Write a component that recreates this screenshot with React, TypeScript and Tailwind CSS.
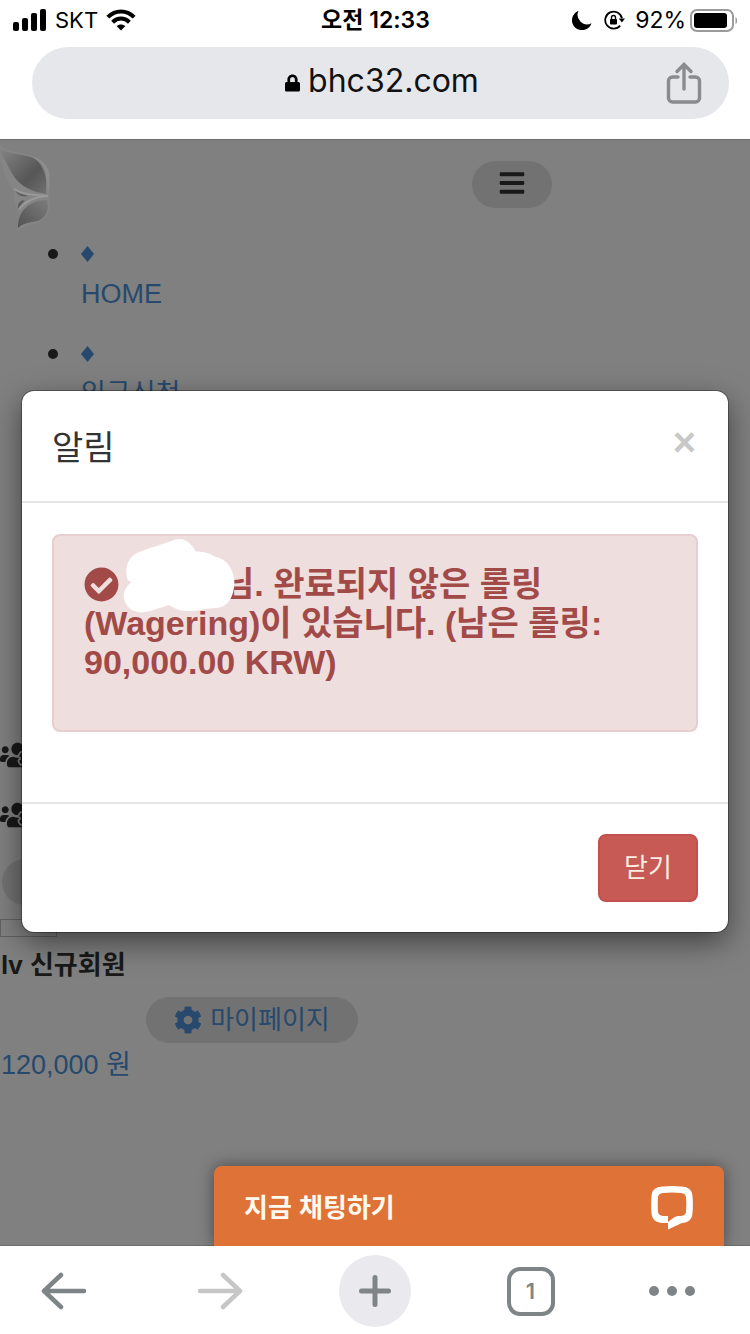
import { FaBars, FaCheckCircle, FaCog, FaLock, FaUsersCog } from "react-icons/fa"

function StatusBar() {
    return (
        <div className="grid h-10 grid-cols-3 items-center pl-[13px] pr-3 font-['Inter','Noto_Sans_CJK_KR',sans-serif] text-[23px] leading-10 text-black">
            <div className="flex items-center gap-2">
                <svg className="h-[22px] w-[34px]" viewBox="0 0 34 22" aria-hidden="true">
                    <rect x="0" y="13" width="6" height="9" rx="2" />
                    <rect x="9" y="9" width="6" height="13" rx="2" />
                    <rect x="18" y="4" width="6" height="18" rx="2" />
                    <rect x="27" y="0" width="6" height="22" rx="2" />
                </svg>
                <span className="text-[22px]">SKT</span>
                <svg className="h-[22px] w-[30px]" viewBox="0 0 30 22" fill="none" stroke="#000" strokeWidth="4" aria-hidden="true">
                    <path d="M1.8 8.2C9.5 .6 20.5 .6 28.2 8.2" />
                    <path d="M6.6 13.2c5-4.8 11.800-4.800 16.800 0" />
                    <path d="M15 21.500l-4.400-4.400c2.600-2.200 6.200-2.200 8.800 0z" fill="#000" stroke="none" />
                </svg>
            </div>
            <div className="text-center font-semibold">오전 12:33</div>
            <div className="flex items-center justify-end">
                <svg className="mr-3 h-5 w-5" viewBox="0 0 20 20" aria-hidden="true">
                    <path d="M6.500 .8A10 10 0 1 0 19.500 13.200 9.500 9.500 0 0 1 6.500 .8z" />
                </svg>
                <svg className="mr-[10px] h-5 w-[21px]" viewBox="0 0 21 20" fill="none" stroke="#000" strokeWidth="1.800" aria-hidden="true">
                    <path d="M18 8.200A8.500 8.500 0 1 0 16.200 15.600" />
                    <path d="M14.800 8.500h6.200l-3.100 4z" fill="#000" stroke="none" />
                    <rect x="6" y="9" width="7" height="5.500" rx="1" fill="#000" stroke="none" />
                    <path d="M7.500 9.500V7.500a2 2 0 0 1 4 0v2" strokeWidth="1.400" />
                </svg>
                <span className="mr-1">92%</span>
                <svg className="h-[23px] w-[48px]" viewBox="0 0 48 23" aria-hidden="true">
                    <rect x="1" y="1" width="42" height="21" rx="6" fill="none" stroke="#9b9b9b" strokeWidth="2" />
                    <rect x="4" y="4" width="33" height="15" rx="3" />
                    <path d="M45.500 8c2.200 1.200 2.200 6 0 7.200z" fill="#9b9b9b" />
                </svg>
            </div>
        </div>
    )
}

function AddressBar() {
    return (
        <div className="ml-8 mr-[21px] mt-[7px] flex h-[72px] items-center rounded-full bg-[#e6e7eb] pr-[27px]">
            <div className="flex flex-1 items-center justify-center gap-2 pl-[66px] font-['Inter',sans-serif] text-[32px] leading-10 text-[#111]">
                <FaLock className="h-5 w-[15px] text-black" aria-hidden="true" />
                <span className="pb-1">bhc32.com</span>
            </div>
            <button aria-label="Share">
                <svg className="h-[42px] w-9" viewBox="0 0 36 42" fill="none" stroke="#8a8b8e" strokeWidth="3.400" strokeLinecap="round" aria-hidden="true">
                    <path d="M12 15H6.500a4 4 0 0 0-4 4v17a4 4 0 0 0 4 4h23a4 4 0 0 0 4-4V19a4 4 0 0 0-4-4H24" />
                    <path d="M18 27V3M11 9.500l7-7 7 7" />
                </svg>
            </button>
        </div>
    )
}

function ButterflyLogo() {
    return (
        <svg className="mt-1 h-[90px] w-[51px]" viewBox="0 0 51 90" aria-hidden="true">
            <defs>
                <linearGradient id="upperWing" x1="0" y1="0" x2="1" y2="1">
                    <stop offset="0" stopColor="#868686" />
                    <stop offset=".65" stopColor="#565656" />
                    <stop offset="1" stopColor="#707070" />
                </linearGradient>
                <linearGradient id="lowerWing" x1="1" y1="0" x2="0" y2="1">
                    <stop offset="0" stopColor="#7c7c7c" />
                    <stop offset="1" stopColor="#525252" />
                </linearGradient>
            </defs>
            <path d="M0 2C4 8 12 8 22 10c14 2 23 8 27 18 2 8 1 17 0 26 2 9 0 20-9 25-8 4-17 2-22 10-1-5 0-12 2-16-4-6-7-18-6-25C6 38 2 24 0 14z" fill="#858585" />
            <path d="M0 3C4 10 12 10 22 12c13 2 20 7 23 16 2 8 1 16 1 23C34 49 20 44 13 32 8 24 5 16 0 9z" fill="url(#upperWing)" />
            <path d="M33 14c9 2 14 8 16 15 1 8 0 15-1 21-1-13-3-27-15-36z" fill="#939393" opacity=".6" />
            <path d="M14 46c7 5 18 6 34 7-13 1-21 4-29 13" fill="none" stroke="#999" strokeWidth="2" />
            <path d="M47 57c2 7 1 15-7 20-6 3-15 1-22 8 0-16 9-27 29-28z" fill="url(#lowerWing)" />
            <path d="M15 47c3 4 7 4 13 6-5 1-10 0-13-6z" fill="#585858" />
            <path d="M25 57c-4 0-8 3-7 9 2-4 5-6 7-9z" fill="#5c5c5c" />
        </svg>
    )
}

function MenuItem({ label }: { label: string }) {
    return (
        <li className="flex gap-[23px]">
            <span className="mt-[15px] size-[10px] rounded-full bg-[#191919]" />
            <a href="#" className="text-[#26496d]">
                <svg className="mb-3 mt-3 h-4 w-[13px]" viewBox="0 0 13 16" fill="currentColor" aria-hidden="true">
                    <path d="M6.500 0L13 8l-6.500 8L0 8z" />
                </svg>
                {label}
            </a>
        </li>
    )
}

function SitePage() {
    return (
        <div className="text-[27px] leading-10 text-[#191919]">
            <div className="flex h-[95px] items-start justify-between pr-[198px]">
                <ButterflyLogo />
                <button className="mt-[22px] flex h-[47px] w-20 items-center justify-center rounded-full bg-[#727272] pb-[3px]" aria-label="Menu">
                    <FaBars className="size-7" />
                </button>
            </div>
            <ul className="flex flex-col gap-5 pl-12">
                <MenuItem label="HOME" />
                <MenuItem label="입금신청" />
            </ul>

            <div className="mt-[321px] flex flex-col gap-5">
                <div className="flex h-10 items-center"><FaUsersCog className="h-7 w-[35px]" /></div>
                <div className="flex h-10 items-center"><FaUsersCog className="h-7 w-[35px]" /></div>
            </div>
            <div className="ml-[2px] mt-6 h-[46px] w-40 rounded-full bg-[#727272]" />
            <div className="mt-[14px] h-[18px] w-[57px] border border-[#626262]" />
            <p className="mt-2 pl-px text-[26px] font-bold">lv 신규회원</p>
            <a href="#" className="ml-[146px] mt-3 flex h-[46px] w-[212px] items-center justify-center gap-2 rounded-full bg-[#727272] text-[26px] text-[#26496d]">
                <FaCog className="size-7" />
                마이페이지
            </a>
            <a href="#" className="mt-[2px] block pl-px text-[#26496d]">120,000 원</a>
        </div>
    )
}

function NoticeModal() {
    return (
        <div
            role="dialog"
            aria-labelledby="notice-title"
            className="absolute inset-x-[22px] top-[252px] rounded-xl bg-white shadow-[0_0_0_1px_rgba(0,0,0,0.3),0_10px_30px_rgba(0,0,0,0.5)]"
        >
            <div className="flex h-[112px] items-center justify-between border-b-2 border-[#e5e5e5] pl-[30px] pr-8 pt-1">
                <h4 id="notice-title" className="text-[34px] leading-10 text-[#333]">알림</h4>
                <button className="pb-3 text-[40px] font-bold leading-10 text-[#c8c8c8]" aria-label="Close">×</button>
            </div>

            <div className="px-[30px] pb-[70px] pt-[31px]">
                <div className="h-[198px] rounded-lg border-2 border-[#e6ced1] bg-[#eedede] px-[30px] pt-[29px]">
                    <p className="break-keep text-[34px] font-bold leading-[39px] text-[#a24a48]">
                        <FaCheckCircle className="inline size-[35px] align-[-6px]" />
                        {/* name is painted over */}
                        <span className="relative inline-block h-8 w-[104px] align-bottom">
                            <svg className="absolute -top-[34px] left-1 h-[75px] w-28" viewBox="248 54 336 226" fill="#fff" aria-hidden="true">
                                <path d="M262 182c-12-36-2-64 25-82 30-14 76-25 114-40 26-10 50 5 66 35 25 0 45 7 56 15 38 8 58 38 60 77-1 45-20 75-55 78-38 1-55 11-90 9-25 0-35-9-52-17-28 7-48 17-78 21-35 2-57-20-59-50 1-17 11-31 24-42z" />
                            </svg>
                        </span>
                        님. 완료되지 않은 롤링 (Wagering)이 있습니다. (남은 롤링: 90,000.00 KRW)
                    </p>
                </div>
            </div>

            <div className="flex justify-end border-t-2 border-[#e5e5e5] p-[30px]">
                <button className="h-[68px] w-[100px] rounded-lg border-2 border-[#c44f4c] bg-[#c75a54] text-[26px] leading-10 text-[#fbeee2]">
                    닫기
                </button>
            </div>
        </div>
    )
}

function ChatWidget() {
    return (
        <button className="absolute bottom-0 left-[214px] right-[26px] flex h-20 items-center justify-between rounded-t-lg bg-[#df7237] pl-[30px] pr-[31px] pt-[3px] text-[26px] font-bold leading-10 text-[#fffaf0] shadow-[0_0_16px_rgba(0,0,0,0.45)]">
            지금 채팅하기
            <svg className="h-[45px] w-[42px]" viewBox="0 0 42 45" aria-hidden="true">
                <path
                    fillRule="evenodd"
                    fill="#fff"
                    d="M12 1.500Q21 .5 30 1.500C38 2 41 5 41.500 11q.8 9 0 17C41 35 37 37.500 31 38L17 44.500V38h-5C5 37.500 1 35 .5 28q-.8-8 0-17C1 5 4 2 12 1.500zM12 8Q21 7.200 30 8q4.500.4 5 4 .6 7 0 15-.5 3.600-5 4h-3q-2 0-4 1.500l-6 4.500V31h-5q-4.500-.4-5-4-.6-8 0-15 .5-3.600 5-4z"
                />
            </svg>
        </button>
    )
}

function BrowserNav() {
    return (
        <nav className="flex h-[88px] items-center justify-between bg-white pl-7 pr-14 pt-[2px] text-[#7f8487]">
            <button className="flex size-[72px] items-center justify-center" aria-label="Back">
                <svg className="h-10 w-[46px]" viewBox="0 0 46 40" fill="none" stroke="currentColor" strokeWidth="4.500" strokeLinecap="round" strokeLinejoin="round" aria-hidden="true">
                    <path d="M43 20H3M20 4L3 20l17 16" />
                </svg>
            </button>
            <button className="flex size-[72px] items-center justify-center text-[#c6c6c6]" aria-label="Forward">
                <svg className="h-10 w-[46px]" viewBox="0 0 46 40" fill="none" stroke="currentColor" strokeWidth="4.500" strokeLinecap="round" strokeLinejoin="round" aria-hidden="true">
                    <path d="M3 20h40M26 4l17 16-17 16" />
                </svg>
            </button>
            <button className="flex size-[72px] items-center justify-center rounded-full bg-[#e9e9ee]" aria-label="New tab">
                <svg className="size-8" viewBox="0 0 32 32" stroke="currentColor" strokeWidth="5" strokeLinecap="round" aria-hidden="true">
                    <path d="M16 2.500v27M2.500 16h27" />
                </svg>
            </button>
            <button className="flex size-[72px] items-center justify-center" aria-label="Tabs">
                <span className="flex h-[49px] w-12 items-center justify-center rounded-[13px] border-4 border-current font-['Inter',sans-serif] text-[22px] font-semibold leading-8">1</span>
            </button>
            <button className="flex h-[72px] w-11 items-center justify-center gap-2" aria-label="More">
                <span className="size-[10px] shrink-0 rounded-full bg-current" />
                <span className="size-[10px] shrink-0 rounded-full bg-current" />
                <span className="size-[10px] shrink-0 rounded-full bg-current" />
            </button>
        </nav>
    )
}

export default function App() {
    return (
        <div className="flex min-h-screen flex-col bg-white font-['Liberation_Sans','Noto_Sans_CJK_KR',sans-serif]">
            <header className="h-[139px] bg-white">
                <StatusBar />
                <AddressBar />
            </header>
            <main className="relative flex-1 overflow-hidden bg-[#808080] shadow-[inset_0_1px_0_#6c6c6c,inset_0_-1px_0_#6c6c6c]">
                <SitePage />
                <NoticeModal />
                <ChatWidget />
            </main>
            <BrowserNav />
        </div>
    )
}
